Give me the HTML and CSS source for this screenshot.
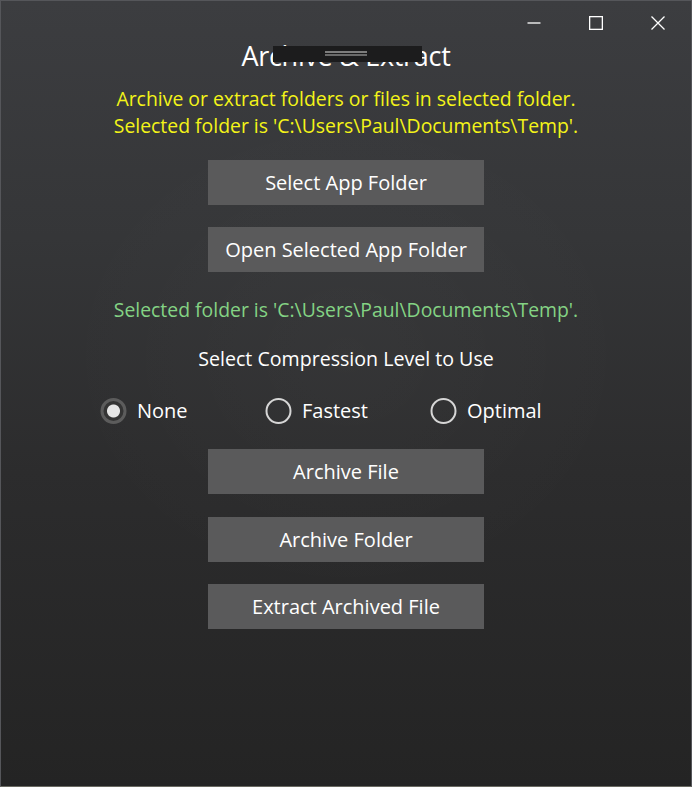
FILE: index.html
```html
<!DOCTYPE html>
<html lang="en">
<head>
<meta charset="utf-8">
<title>Archive &amp; Extract</title>
<link rel="stylesheet" href="styles.css">
</head>
<body>
<div class="window">
  <div class="titlebar">
    <div class="ctl"><svg width="14" height="14" viewBox="0 0 14 14"><path d="M0.5 7h13" stroke="#fff" stroke-width="1.3"/></svg></div>
    <div class="ctl"><svg width="14" height="14" viewBox="0 0 14 14"><rect x="0.65" y="0.65" width="12.7" height="12.7" fill="none" stroke="#fff" stroke-width="1.3"/></svg></div>
    <div class="ctl"><svg width="14" height="14" viewBox="0 0 14 14"><path d="M0.5 0.5L13.5 13.5M13.5 0.5L0.5 13.5" stroke="#fff" stroke-width="1.3"/></svg></div>
  </div>
  <div class="content">
    <h1 class="title">Archive &amp; Extract</h1>
    <p class="info">Archive or extract folders or files in selected folder.<br>Selected folder is 'C:\Users\Paul\Documents\Temp'.</p>
    <button class="btn first">Select App Folder</button>
    <button class="btn">Open Selected App Folder</button>
    <p class="selected">Selected folder is 'C:\Users\Paul\Documents\Temp'.</p>
    <p class="label">Select Compression Level to Use</p>
    <div class="radios">
      <label class="radio"><span class="dot checked"></span>None</label>
      <label class="radio"><span class="dot"></span>Fastest</label>
      <label class="radio"><span class="dot"></span>Optimal</label>
    </div>
    <button class="btn after-radios">Archive File</button>
    <button class="btn wide-gap">Archive Folder</button>
    <button class="btn">Extract Archived File</button>
  </div>
  <div class="redact"><span class="redact-line"></span></div>
</div>
</body>
</html>
```
FILE: styles.css
```css
html, body {
  margin: 0;
  padding: 0;
  background: #2b2b2b;
}
body {
  font-family: "Open Sans", "Noto Sans", sans-serif;
  color: #fff;
}
.window {
  position: relative;
  width: 692px;
  height: 787px;
  box-sizing: border-box;
  border: 1px solid #55565a;
  border-bottom-color: #6a6a62;
  background:
    radial-gradient(ellipse 60% 45% at 50% 45%, rgba(255,255,255,0.025), rgba(255,255,255,0) 70%),
    linear-gradient(180deg, #3c3d40 0%, #353638 30%, #2c2c2d 60%, #242424 100%);
  overflow: hidden;
}
.titlebar {
  display: flex;
  justify-content: flex-end;
  height: 44px;
  padding-right: 2px;
}
.ctl {
  width: 62px;
  display: flex;
  align-items: center;
  justify-content: center;
}
.content {
  display: flex;
  flex-direction: column;
  align-items: center;
}
.title {
  margin: -7px 0 0;
  font-size: 27px;
  font-weight: 400;
  line-height: 36px;
  letter-spacing: -0.3px;
}
.info {
  margin: 11px 0 0;
  text-align: center;
  color: #f4f418;
  font-size: 19.4px;
  line-height: 27px;
}
.btn {
  width: 276px;
  height: 45px;
  border: 0;
  padding: 0;
  background: #5a5a5b;
  color: #fff;
  font-family: inherit;
  font-size: 20px;
  margin-top: 22px;
}
.btn.first {
  margin-top: 21px;
}
.btn.wide-gap {
  margin-top: 23px;
}
.selected {
  margin: 24px 0 0;
  color: #84d384;
  font-size: 19.4px;
  line-height: 27px;
}
.label {
  margin: 22px 0 0;
  font-size: 19.6px;
  line-height: 27px;
}
.radios {
  display: grid;
  grid-template-columns: repeat(3, 165px);
  margin: 25px 0 0 0;
  transform: translateX(1.5px);
}
.radio {
  display: flex;
  align-items: center;
  gap: 11px;
  font-size: 20px;
  line-height: 28px;
}
.dot {
  width: 26px;
  height: 26px;
  box-sizing: border-box;
  border-radius: 50%;
  border: 2.5px solid #d6d6d6;
}
.dot.checked {
  border: 3px solid #5c5c5c;
  background: radial-gradient(circle, #e6e6e6 0 6px, #343434 7px);
}
.btn.after-radios {
  margin-top: 24px;
}
.redact {
  position: absolute;
  left: 272px;
  top: 45px;
  width: 149px;
  height: 16px;
  background: #1c1c1d;
}
.redact-line {
  position: absolute;
  left: 52px;
  top: 5px;
  width: 42px;
  height: 1px;
  border-top: 2px solid #7d7d7d;
  border-bottom: 2px solid #6a6a6a;
}
```
